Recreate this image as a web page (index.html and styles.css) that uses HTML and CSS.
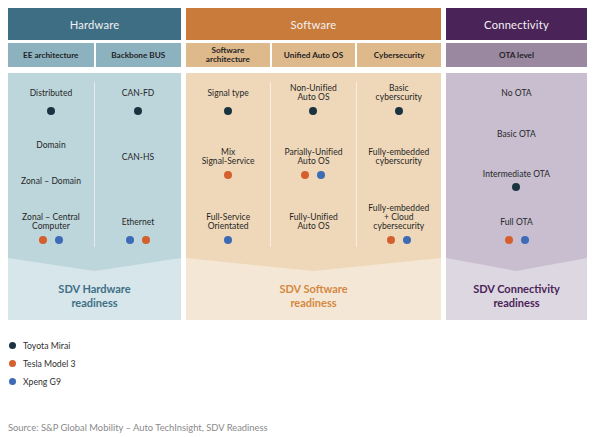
FILE: index.html
```html
<!DOCTYPE html>
<html>
<head>
<meta charset="utf-8">
<link rel="stylesheet" href="styles.css">
</head>
<body>
<div class="page">
  <div class="chart">
    <section class="sec hw">
      <div class="head">Hardware</div>
      <div class="subs">
        <div class="sub">EE architecture</div>
        <div class="sub">Backbone BUS</div>
      </div>
      <div class="body">
        <div class="upper">
          <div class="cols">
            <div class="col">
              <div class="item"><div class="lbl">Distributed</div><div class="dots"><span class="dot toyota"></span></div></div>
              <div class="item mt-21"><div class="lbl">Domain</div></div>
              <div class="item mt-18"><div class="lbl">Zonal – Domain</div></div>
              <div class="item mt-23"><div class="lbl">Zonal – Central<br>Computer</div><div class="dots"><span class="dot tesla"></span><span class="dot xpeng"></span></div></div>
            </div>
            <div class="col">
              <div class="item"><div class="lbl">CAN-FD</div><div class="dots"><span class="dot toyota"></span></div></div>
              <div class="item mt-33"><div class="lbl">CAN-HS</div></div>
              <div class="item mt-47"><div class="lbl">Ethernet</div><div class="dots"><span class="dot xpeng"></span><span class="dot tesla"></span></div></div>
            </div>
          </div>
        </div>
        <div class="ready">SDV Hardware<br>readiness</div>
      </div>
    </section>

    <section class="sec sw">
      <div class="head">Software</div>
      <div class="subs">
        <div class="sub">Software<br>architecture</div>
        <div class="sub">Unified Auto OS</div>
        <div class="sub">Cybersecurity</div>
      </div>
      <div class="body">
        <div class="upper">
          <div class="cols">
            <div class="col">
              <div class="item"><div class="lbl">Signal type</div><div class="dots"><span class="dot toyota"></span></div></div>
              <div class="item mt-33"><div class="lbl">Mix<br>Signal-Service</div><div class="dots"><span class="dot tesla"></span></div></div>
              <div class="item mt-34"><div class="lbl">Full-Service<br>Orientated</div><div class="dots"><span class="dot xpeng"></span></div></div>
            </div>
            <div class="col">
              <div class="item"><div class="lbl">Non-Unified<br>Auto OS</div><div class="dots"><span class="dot toyota"></span></div></div>
              <div class="item mt-33"><div class="lbl">Parially-Unified<br>Auto OS</div><div class="dots"><span class="dot tesla"></span><span class="dot xpeng"></span></div></div>
              <div class="item mt-34"><div class="lbl">Fully-Unified<br>Auto OS</div></div>
            </div>
            <div class="col">
              <div class="item"><div class="lbl">Basic<br>cyberscurity</div><div class="dots"><span class="dot toyota"></span></div></div>
              <div class="item mt-33"><div class="lbl">Fully-embedded<br>cyberscurity</div></div>
              <div class="item mt-38"><div class="lbl">Fully-embedded<br>+ Cloud<br>cybersecurity</div><div class="dots"><span class="dot tesla"></span><span class="dot xpeng"></span></div></div>
            </div>
          </div>
        </div>
        <div class="ready">SDV Software<br>readiness</div>
      </div>
    </section>

    <section class="sec cn">
      <div class="head">Connectivity</div>
      <div class="subs">
        <div class="sub">OTA level</div>
      </div>
      <div class="body">
        <div class="upper">
          <div class="cols">
            <div class="col">
              <div class="item"><div class="lbl">No OTA</div></div>
              <div class="item mt-23"><div class="lbl">Basic OTA</div></div>
              <div class="item mt-27"><div class="lbl one">Intermediate OTA</div><div class="dots close"><span class="dot toyota"></span></div></div>
              <div class="item mt-22"><div class="lbl">Full OTA</div><div class="dots"><span class="dot tesla"></span><span class="dot xpeng"></span></div></div>
            </div>
          </div>
        </div>
        <div class="ready">SDV Connectivity<br>readiness</div>
      </div>
    </section>
  </div>

  <ul class="legend">
    <li><span class="dot toyota"></span>Toyota Mirai</li>
    <li><span class="dot tesla"></span>Tesla Model 3</li>
    <li><span class="dot xpeng"></span>Xpeng G9</li>
  </ul>

  <p class="source">Source: S&amp;P Global Mobility – Auto TechInsight, SDV Readiness</p>
</div>
</body>
</html>
```

FILE: styles.css
```css
* { box-sizing: border-box; }

html, body {
  margin: 0;
  padding: 0;
  background: #ffffff;
}

body {
  font-family: Lato, "Open Sans", "Liberation Sans", sans-serif;
  color: #2a2a2a;
}

.page {
  padding: 8px 0 0 8px;
}

.chart {
  display: flex;
  gap: 5px;
}

.sec {
  display: flex;
  flex-direction: column;
}

.hw { width: 173px; }
.sw { width: 255px; }
.cn { width: 141px; }

.head {
  height: 32px;
  display: flex;
  align-items: center;
  justify-content: center;
  color: #f3f1f3;
  font-size: 11.2px;
  letter-spacing: 0.2px;
}

.subs {
  display: flex;
  gap: 2px;
  margin-top: 3px;
  height: 24px;
}

.sub {
  flex: 1;
  display: flex;
  align-items: center;
  justify-content: center;
  text-align: center;
  font-size: 8.2px;
  font-weight: 700;
  line-height: 9px;
  color: #1f2326;
}

.body {
  margin-top: 6px;
  height: 247px;
  display: flex;
  flex-direction: column;
}

.upper {
  height: 198px;
  padding-top: 9px;
  clip-path: polygon(0 0, 100% 0, 100% 185px, 50% 198px, 0 185px);
}

.cols {
  display: flex;
  height: 165px;
}

.col {
  flex: 1;
  display: flex;
  flex-direction: column;
  align-items: center;
  padding-top: 2px;
}

.col + .col {
  border-left: 1px solid rgba(255, 255, 255, 0.55);
}

.item {
  display: flex;
  flex-direction: column;
  align-items: center;
}

.lbl {
  min-height: 18px;
  display: flex;
  align-items: center;
  justify-content: center;
  text-align: center;
  font-size: 8.5px;
  line-height: 9px;
  letter-spacing: 0.05px;
  color: #262626;
  white-space: nowrap;
}

.lbl.one { min-height: 9px; }

.dots {
  display: flex;
  gap: 8px;
  margin-top: 5px;
  height: 8px;
}

.dots.close { margin-top: 4px; }

.dot {
  width: 8px;
  height: 8px;
  border-radius: 50%;
  display: inline-block;
}

.toyota { background: #1b3340; }
.tesla { background: #d55f2d; }
.xpeng { background: #3d6bb5; }

.mt-18 { margin-top: 18px; }
.mt-21 { margin-top: 21px; }
.mt-22 { margin-top: 22px; }
.mt-23 { margin-top: 23px; }
.mt-27 { margin-top: 27px; }
.mt-33 { margin-top: 33px; }
.mt-34 { margin-top: 34px; }
.mt-38 { margin-top: 38px; }
.mt-47 { margin-top: 47px; }

.ready {
  margin-top: 11px;
  text-align: center;
  font-size: 11px;
  font-weight: 700;
  line-height: 14px;
}

/* Hardware palette */
.hw .head { background: #3e6e83; }
.hw .sub { background: #8db2bf; }
.hw .body { background: #d6e6ea; }
.hw .upper { background: #bdd6dc; }
.hw .ready { color: #3f6f86; }

/* Software palette */
.sw .head { background: #c87b3b; }
.sw .sub { background: #deb98b; }
.sw .body { background: #f4e7d6; }
.sw .upper { background: #efd8b9; }
.sw .ready { color: #d4883f; }

/* Connectivity palette */
.cn .head { background: #4a2458; }
.cn .sub { background: #9a88a0; }
.cn .body { background: #ddd7e1; }
.cn .upper { background: #c8bed0; }
.cn .ready { color: #4a2458; }

.legend {
  list-style: none;
  margin: 16px 0 0 0;
  padding: 0;
}

.legend li {
  display: flex;
  align-items: center;
  height: 18px;
  font-size: 8.7px;
  color: #2f2f2f;
}

.legend .dot {
  width: 7px;
  height: 7px;
  margin: 0 7px 0 1px;
}

.source {
  margin: 32px 0 0 0;
  font-size: 9.4px;
  line-height: 12px;
  color: #8a8a8a;
}
```
